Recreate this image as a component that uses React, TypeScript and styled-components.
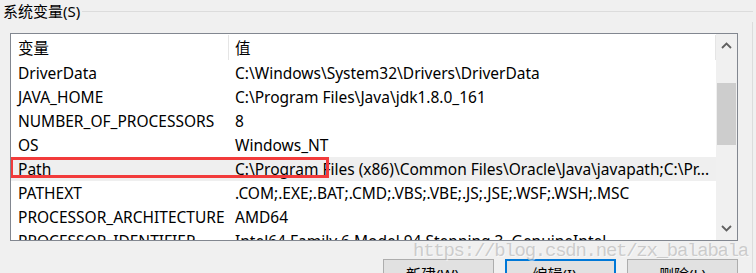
import React from "react";
import styled, { createGlobalStyle } from "styled-components";

const FONT = `"Noto Sans", "Noto Sans CJK SC", sans-serif`;

const GlobalStyle = createGlobalStyle`
  html, body {
    margin: 0;
    padding: 0;
    background: #f0f0f0;
  }
  body {
    font-family: ${FONT};
    color: #000;
  }
  * {
    box-sizing: border-box;
  }
`;

type Variable = {
  name: string;
  value: string;
  selected?: boolean;
  marked?: boolean;
};

const variables: Variable[] = [
  { name: "DriverData", value: "C:\\Windows\\System32\\Drivers\\DriverData" },
  { name: "JAVA_HOME", value: "C:\\Program Files\\Java\\jdk1.8.0_161" },
  { name: "NUMBER_OF_PROCESSORS", value: "8" },
  { name: "OS", value: "Windows_NT" },
  {
    name: "Path",
    value:
      "C:\\Program Files (x86)\\Common Files\\Oracle\\Java\\javapath;C:\\Pr...",
    selected: true,
    marked: true,
  },
  { name: "PATHEXT", value: ".COM;.EXE;.BAT;.CMD;.VBS;.VBE;.JS;.JSE;.WSF;.WSH;.MSC" },
  { name: "PROCESSOR_ARCHITECTURE", value: "AMD64" },
  {
    name: "PROCESSOR_IDENTIFIER",
    value: "Intel64 Family 6 Model 94 Stepping 3, GenuineIntel",
  },
];

function Chevron({ up }: { up?: boolean }) {
  return (
    <svg width="11" height="7" viewBox="0 0 11 7">
      <path
        d={up ? "M1 6 L5.5 1.5 L10 6" : "M1 1 L5.5 5.5 L10 1"}
        fill="none"
        stroke="#606060"
        strokeWidth="1.8"
      />
    </svg>
  );
}

function App() {
  return (
    <Page>
      <GlobalStyle />
      <Group>
        <GroupHeader>
          <Legend>系统变量(S)</Legend>
          <Rule />
        </GroupHeader>
        <GroupBody>
          <ListBox>
            <Table>
              <HeaderRow>
                <HeaderCell $pad={7}>变量</HeaderCell>
                <HeaderCell $pad={6}>值</HeaderCell>
              </HeaderRow>
              {variables.map((v) => (
                <Row key={v.name} $selected={v.selected}>
                  <NameCell>{v.name}</NameCell>
                  <ValueCell>{v.value}</ValueCell>
                  {v.marked && <Marker />}
                </Row>
              ))}
            </Table>
            <ScrollBar>
              <Arrow>
                <Chevron up />
              </Arrow>
              <Track>
                <Thumb />
              </Track>
              <Arrow>
                <Chevron />
              </Arrow>
            </ScrollBar>
          </ListBox>
          <ButtonRow>
            <Button>新建(W)...</Button>
            <Button $focused>编辑(I)...</Button>
            <Button>删除(L)</Button>
          </ButtonRow>
        </GroupBody>
      </Group>
      <Watermark>https://blog.csdn.net/zx_balabala</Watermark>
    </Page>
  );
}

const Page = styled.div`
  position: relative;
  width: 756px;
  height: 273px;
  overflow: hidden;
  background: #f0f0f0;
`;

const Group = styled.section`
  width: 753px;
`;

const GroupHeader = styled.div`
  display: flex;
  align-items: center;
  height: 22px;
  padding-left: 3px;
`;

const Legend = styled.span`
  font-size: 15px;
  line-height: 22px;
  padding-right: 2px;
  white-space: nowrap;
`;

const Rule = styled.div`
  flex: 1;
  height: 1px;
  background: #dcdcdc;
`;

const GroupBody = styled.div`
  border-right: 1px solid #dcdcdc;
  padding: 11px 14px 0 10px;
`;

const ListBox = styled.div`
  display: flex;
  height: 208px;
  border: 1px solid #828790;
  background: #fff;
`;

const Table = styled.div`
  flex: 1;
  overflow: hidden;
  font-size: 15.5px;
`;

const HeaderRow = styled.div`
  display: grid;
  grid-template-columns: 218px 1fr;
  height: 27px;
`;

const HeaderCell = styled.div<{ $pad: number }>`
  display: flex;
  align-items: center;
  padding-left: ${(p) => p.$pad}px;
  margin: 1px 0;
  border-right: 1px solid #e5e5e5;
  white-space: nowrap;
`;

const Row = styled.div<{ $selected?: boolean }>`
  position: relative;
  display: grid;
  grid-template-columns: 218px 1fr;
  height: 24px;
  align-items: center;
  background: ${(p) => (p.$selected ? "#efefef" : "transparent")};
`;

const NameCell = styled.div`
  padding-left: 7px;
  white-space: nowrap;
`;

const ValueCell = styled.div`
  padding: 0 6px;
  white-space: nowrap;
  overflow: hidden;
  text-overflow: ellipsis;
`;

const Marker = styled.div`
  position: absolute;
  left: -1px;
  top: 0;
  width: 319px;
  height: 21px;
  border: 3px solid #f23b3b;
  pointer-events: none;
`;

const ScrollBar = styled.div`
  display: flex;
  flex-direction: column;
  width: 21px;
  background: #f0f0f0;
`;

const Arrow = styled.div`
  display: flex;
  align-items: center;
  justify-content: center;
  height: 23px;
`;

const Track = styled.div`
  flex: 1;
  padding: 26px 1px 0;
`;

const Thumb = styled.div`
  height: 62px;
  background: #cdcdcd;
`;

const ButtonRow = styled.div`
  display: flex;
  justify-content: flex-end;
  gap: 11px;
  margin-top: 18px;
`;

const Button = styled.button<{ $focused?: boolean }>`
  width: 111px;
  height: 29px;
  padding: 0;
  font-family: ${FONT};
  font-size: 15px;
  color: #000;
  background: #e1e1e1;
  border: ${(p) => (p.$focused ? "2px solid #0078d7" : "1px solid #adadad")};
`;

const Watermark = styled.div`
  position: absolute;
  left: 413px;
  top: 240px;
  font-family: "Liberation Mono", monospace;
  font-size: 19px;
  line-height: 22px;
  letter-spacing: -1.25px;
  color: rgba(170, 170, 170, 0.55);
  text-shadow: 1px 1px 0 rgba(255, 255, 255, 0.5);
  white-space: nowrap;
  pointer-events: none;
`;

export default App;
